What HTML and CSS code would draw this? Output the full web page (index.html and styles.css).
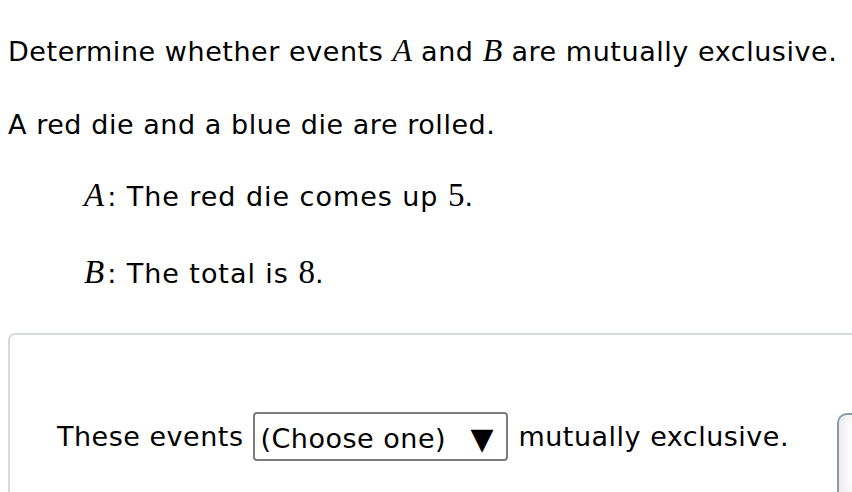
FILE: index.html
```html
<!DOCTYPE html>
<html lang="en">
<head>
    <meta charset="UTF-8">
    <title>Mutually exclusive events</title>
    <link rel="stylesheet" href="styles.css">
</head>
<body>
    <div class="question">
        <p class="prompt">Determine whether events <span class="math">A</span> and <span class="math">B</span> are mutually exclusive.</p>
        <p class="prompt">A red die and a blue die are rolled.</p>
        <p class="event"><span class="math var">A</span>: The red die comes up <span class="num">5</span>.</p>
        <p class="event"><span class="math var">B</span>: The total is <span class="num">8</span>.</p>
    </div>

    <div class="answer-area">
        <div class="answer-box">
            <div class="answer-row">
                <span>These events</span>
                <div class="choose">
                    <span>(Choose one)</span>
                    <span class="arrow">&#9660;</span>
                </div>
                <span>mutually exclusive.</span>
            </div>
        </div>
        <div class="side-panel"></div>
    </div>
</body>
</html>
```

FILE: styles.css
```css
body {
    font-family: 'DejaVu Sans', Verdana, sans-serif;
    color: #000;
    background: #fff;
    margin: 0;
    padding: 0;
    overflow: hidden;
    height: 492px;
}

.question {
    padding: 0 8px;
}

.prompt,
.event {
    font-size: 27px;
    letter-spacing: 0.55px;
    line-height: 36px;
    margin: 0;
}

.prompt:first-child {
    padding-top: 32px;
}

.prompt + .prompt {
    margin-top: 37px;
}

.event {
    margin: 34px 0 0 76px;
    letter-spacing: 0.95px;
}

.event + .event {
    margin-top: 39px;
}

.math {
    font-family: 'Liberation Serif', 'Times New Roman', serif;
    font-style: italic;
    font-size: 32px;
    letter-spacing: 0;
}

.var {
    font-size: 33px;
    margin-right: 3px;
}

.num {
    font-family: 'Liberation Serif', 'Times New Roman', serif;
    font-size: 33px;
    letter-spacing: 0;
}

.answer-area {
    margin-top: 41px;
    padding-left: 8px;
}

.answer-box {
    border: 2px solid #d6dadd;
    border-right: none;
    border-bottom: none;
    border-radius: 7px 0 0 0;
    height: 82px;
    padding: 77px 0 0 47px;
}

.answer-row {
    display: flex;
    align-items: center;
    font-size: 27px;
    letter-spacing: 0.5px;
    gap: 10px;
}

.choose {
    display: flex;
    align-items: center;
    justify-content: space-between;
    border: 2px solid #7d7d7d;
    border-radius: 4px;
    padding: 4px 13px 0 5px;
    box-sizing: border-box;
    height: 49px;
    width: 255px;
}

.arrow {
    font-size: 30px;
    letter-spacing: 0;
}

.side-panel {
    position: absolute;
    left: 837px;
    top: 413px;
    width: 13px;
    height: 77px;
    border: 2px solid #8a9aa6;
    border-right: none;
    border-bottom: none;
    border-radius: 10px 0 0 0;
    box-shadow: inset 6px 0 8px rgba(0,0,0,0.08);
    background: #fff;
}
```
